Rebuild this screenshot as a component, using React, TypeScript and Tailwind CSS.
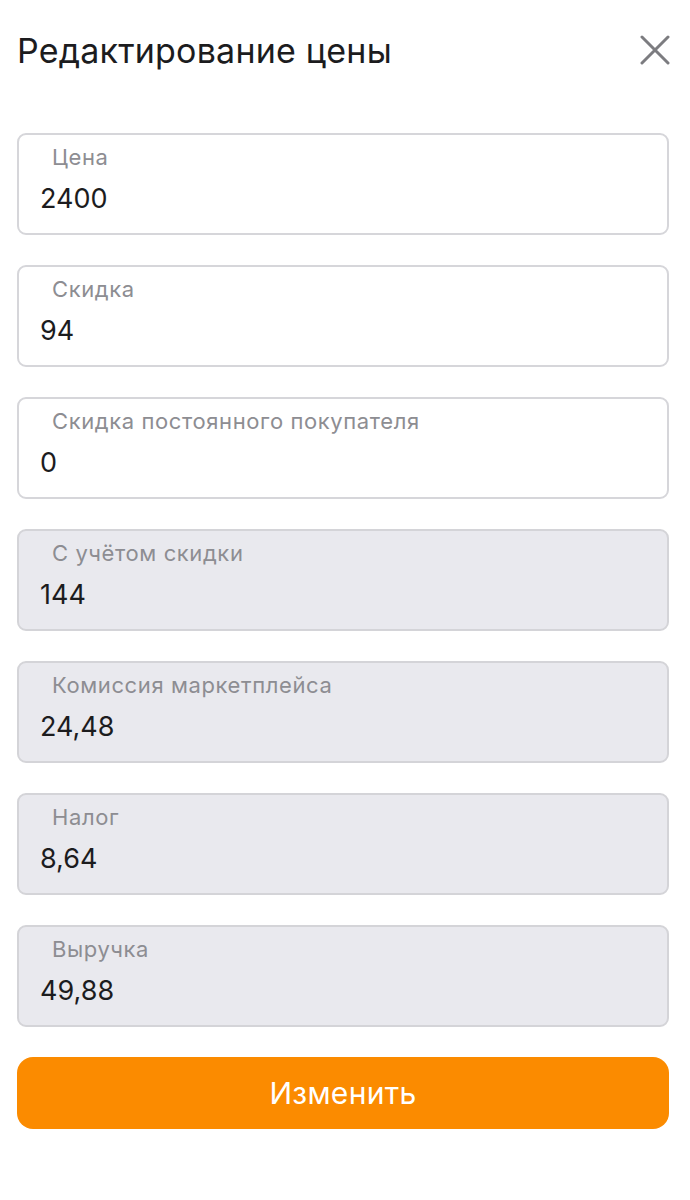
const fields = [
  { label: "Цена", value: "2400", editable: true },
  { label: "Скидка", value: "94", editable: true },
  { label: "Скидка постоянного покупателя", value: "0", editable: true },
  { label: "С учётом скидки", value: "144", editable: false },
  { label: "Комиссия маркетплейса", value: "24,48", editable: false },
  { label: "Налог", value: "8,64", editable: false },
  { label: "Выручка", value: "49,88", editable: false },
];

function Field({ label, value, editable }: { label: string; value: string; editable: boolean }) {
  return (
    <div
      className={`h-[102px] rounded-[9px] border-2 pt-[9px] ${
        editable ? "bg-white border-[#d6d6da]" : "bg-[#e9e9ee] border-[#d4d4d8]"
      }`}
    >
      <div className="pl-[33px] text-[22px] leading-[26px] tracking-[0.6px] text-[#8d8d92]">{label}</div>
      <div className="pl-[21px] mt-[13px] text-[27px] leading-[32px] text-[#1c1c1e]">{value}</div>
    </div>
  );
}

export default function App() {
  return (
    <div className="w-[690px] h-[1200px] bg-white pl-[17px] pr-[21px] font-['Inter',sans-serif]">
      <div className="flex items-center justify-between h-[100px]">
        <h1 className="text-[34px] text-[#1c1c1e] tracking-[0.2px]">Редактирование цены</h1>
        <svg width="30" height="30" viewBox="0 0 30 30" className="mr-[-1px]">
          <path d="M2 2 L28 28 M28 2 L2 28" stroke="#7c7c80" strokeWidth="3" strokeLinecap="round" />
        </svg>
      </div>
      <div className="flex flex-col gap-[30px] pt-[33px]">
        {fields.map((f) => (
          <Field key={f.label} {...f} />
        ))}
      </div>
      <button className="mt-[30px] w-full h-[72px] rounded-[16px] bg-[#fb8b00] text-white text-[30px] tracking-[0.3px]">
        Изменить
      </button>
    </div>
  );
}
